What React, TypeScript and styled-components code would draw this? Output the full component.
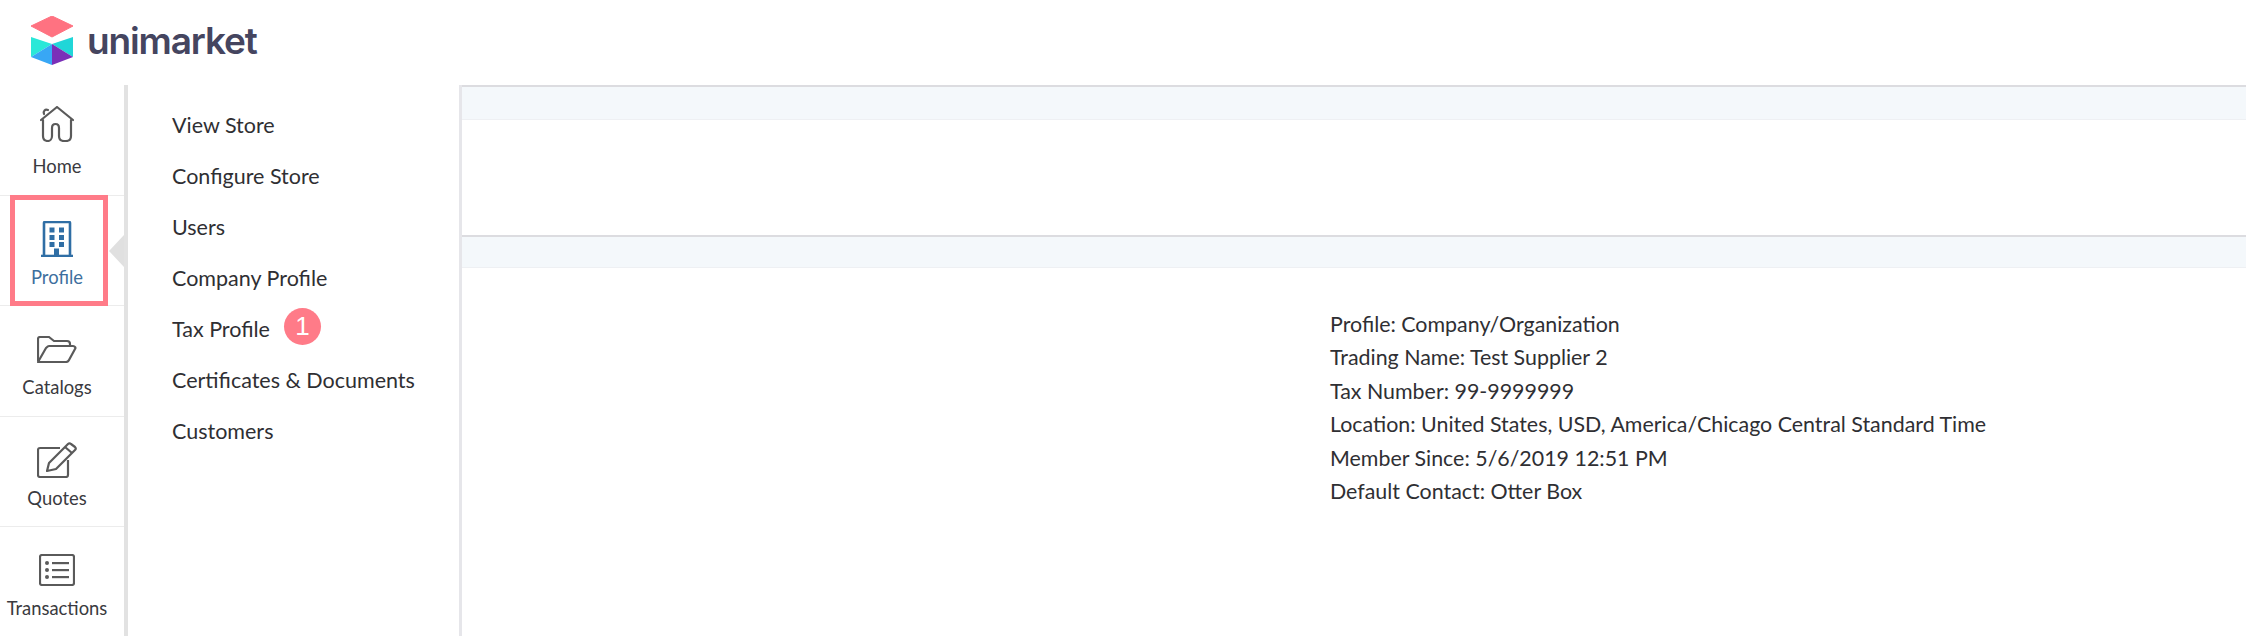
import React from 'react'
import styled, { createGlobalStyle } from 'styled-components';

const GlobalStyle = createGlobalStyle`
    html, body {
        margin: 0;
        padding: 0;
        background: #fff;
        height: 100%;
        overflow: hidden;
    }
    body {
        font-family: "Lato", "Noto Sans", sans-serif;
        color: #2f2f33;
    }
`;

const Page = styled.div`
    width: 2246px;
    height: 636px;
    display: flex;
    flex-direction: column;
    overflow: hidden;
`;

const Header = styled.header`
    height: 85px;
    flex: none;
    display: flex;
    align-items: flex-start;
    padding: 14px 0 0 31px;
    box-sizing: border-box;
`;

const Brand = styled.div`
    display: flex;
    align-items: center;
    gap: 14px;
`;

const BrandName = styled.span`
    font-family: "Inter", sans-serif;
    font-size: 37px;
    font-weight: 600;
    letter-spacing: -1.15px;
    color: #45455f;
    line-height: 50px;
    margin-top: 2px;
`;

const Body = styled.div`
    flex: 1;
    display: flex;
    min-height: 0;
`;

const Rail = styled.nav`
    width: 124px;
    flex: none;
    border-right: 4px solid #e2e2e2;
    position: relative;
`;

const RailItem = styled.a<{ $active?: boolean }>`
    height: 110.6px;
    box-sizing: border-box;
    display: flex;
    flex-direction: column;
    align-items: center;
    padding: 21px 10px 0 0;
    gap: 5px;
    font-size: 18.4px;
    line-height: 22px;
    color: ${props => props.$active ? '#3d6f9e' : '#3a3a40'};
    border-bottom: 1px solid #ececec;
    position: relative;
    &:last-of-type {
        border-bottom: none;
    }
`;

const ActiveFrame = styled.span`
    position: absolute;
    left: 10px;
    top: -1px;
    width: 98px;
    height: 111px;
    box-sizing: border-box;
    border: 5px solid #ff7b88;
`;

const Caret = styled.span`
    position: absolute;
    right: 0;
    top: 150px;
    width: 0;
    height: 0;
    border-top: 16px solid transparent;
    border-bottom: 16px solid transparent;
    border-right: 15px solid #e0e0e0;
`;

const IconBox = styled.span<{ $lift?: number }>`
    width: 44px;
    height: 44px;
    display: flex;
    align-items: center;
    justify-content: center;
    transform: translateY(${props => props.$lift ? -props.$lift : 0}px);
`;

const SubMenu = styled.ul`
    width: 334px;
    flex: none;
    box-sizing: border-box;
    margin: 0;
    padding: 14px 0 0 44px;
    list-style: none;
    border-right: 3px solid #e6e6ea;
`;

const SubItem = styled.li`
    height: 51px;
    display: flex;
    align-items: center;
    gap: 14px;
    font-size: 21.5px;
    color: #2f2f33;
    white-space: nowrap;
`;

const Badge = styled.span`
    width: 37px;
    height: 37px;
    flex: none;
    border-radius: 50%;
    background: #ff7b88;
    color: #fff;
    font-family: "Liberation Sans", sans-serif;
    font-size: 26px;
    display: flex;
    align-items: center;
    justify-content: center;
    margin-top: -5px;
`;

const Content = styled.main`
    flex: 1;
    display: flex;
    flex-direction: column;
    min-width: 0;
`;

const Band = styled.div<{ $height: number }>`
    height: ${props => props.$height}px;
    box-sizing: border-box;
    flex: none;
    background: #f4f8fb;
    border-top: 2px solid #dcdce0;
    border-bottom: 1px solid #eef0f3;
`;

const Spacer = styled.div`
    height: 115px;
    flex: none;
`;

const Details = styled.div`
    padding: 40px 0 0 868px;
    font-size: 21.4px;
    line-height: 33.4px;
    color: #2f2f33;
    white-space: nowrap;
`;

const Logo = () => (
    <svg width="42" height="49" viewBox="0 0 42 49">
        <polygon points="21,0 42,10 21,21 0,10" fill="#ff7281" stroke="#ff7281" strokeLinejoin="round" />
        <polygon points="0,21 21,28 0,41" fill="#2ae8d8" />
        <polygon points="42,21 21,28 42,41" fill="#20d6d8" />
        <polygon points="0,41 21,28 21,49" fill="#38a7f5" />
        <polygon points="42,41 21,28 21,49" fill="#7a2fb8" />
    </svg>
);

const HomeIcon = () => (
    <svg width="34" height="36" viewBox="0 0 34 36" fill="none" stroke="#5a5a5a" strokeWidth="2.2" strokeLinecap="round" strokeLinejoin="round">
        <path d="M1 14 L17 1 L33 14" />
        <path d="M4 8 C3 5 5 3 8 4" />
        <path d="M3 14 V30 C3 33 5 35 8 35 C10 35 12 33 12 30 V22 C12 19 14 18 15.5 18 C17 18 19 19 19 22 V30 C19 33 21 35 24 35 H26 C29 35 31 33 31 30 V14" />
    </svg>
);

const BuildingIcon = () => (
    <svg width="32" height="36" viewBox="0 0 32 36" fill="none" stroke="#2f6ea5" strokeWidth="2.6">
        <path d="M3 35 V2 C3 1.500 3.500 1 4 1 H28 C28.500 1 29 1.500 29 2 V35" />
        <path d="M0 35 H32" />
        <g fill="#2f6ea5" stroke="none">
            <rect x="8.500" y="6.500" width="5" height="5" />
            <rect x="18" y="6.500" width="5" height="5" />
            <rect x="8.500" y="14" width="5" height="5" />
            <rect x="18" y="14" width="5" height="5" />
            <rect x="8.500" y="21" width="5" height="5" />
            <rect x="18" y="21" width="5" height="5" />
            <rect x="13" y="27.500" width="5" height="8" />
        </g>
    </svg>
);

const FolderIcon = () => (
    <svg width="40" height="27" viewBox="0 0 40 27" fill="none" stroke="#5a5a5a" strokeWidth="2.2" strokeLinejoin="round">
        <path d="M1 25 V3 C1 2 2 1 3 1 H12 L17 5 H30 C32 5 33 6 33 8 V10" />
        <path d="M1 26 L9 12 C10 11 11 10 12 10 H36 C38 10 39 12 38 13 L32 24 C31 26 30 26 29 26 H1 Z" />
    </svg>
);

const QuoteIcon = () => (
    <svg width="40" height="36" viewBox="0 0 40 36" fill="none" stroke="#5a5a5a" strokeWidth="2.2" strokeLinejoin="round">
        <path d="M23 6 H3 C2 6 1 7 1 8 V33 C1 34 2 35 3 35 H29 C30 35 31 34 31 33 V18" />
        <path d="M12 21 L31 2 C32 1 33 1 34 2 L38 5 C39 6 39 7 38 8 L19 27 L10 29 Z" />
        <path d="M28 5 L35 11" />
    </svg>
);

const ListIcon = () => (
    <svg width="36" height="32" viewBox="0 0 36 32" fill="none" stroke="#5a5a5a" strokeWidth="2.2">
        <rect x="1" y="1" width="34" height="30" rx="2" />
        <g fill="#5a5a5a" stroke="none">
            <circle cx="8" cy="9" r="2" />
            <circle cx="8" cy="16" r="2" />
            <circle cx="8" cy="23" r="2" />
            <rect x="13" y="8" width="17" height="2.200" />
            <rect x="13" y="15" width="17" height="2.200" />
            <rect x="13" y="22" width="17" height="2.200" />
        </g>
    </svg>
);

const railItems = [
    { label: 'Home', icon: <HomeIcon />, lift: 4 },
    { label: 'Profile', icon: <BuildingIcon />, active: true },
    { label: 'Catalogs', icon: <FolderIcon /> },
    { label: 'Quotes', icon: <QuoteIcon /> },
    { label: 'Transactions', icon: <ListIcon /> },
];

const subItems = ['View Store', 'Configure Store', 'Users', 'Company Profile', 'Tax Profile', 'Certificates & Documents', 'Customers'];

const details = [
    'Profile: Company/Organization',
    'Trading Name: Test Supplier 2',
    'Tax Number: 99-9999999',
    'Location: United States, USD, America/Chicago Central Standard Time',
    'Member Since: 5/6/2019 12:51 PM',
    'Default Contact: Otter Box',
];

export default function App() {
    return (
        <Page>
            <GlobalStyle />
            <Header>
                <Brand>
                    <Logo />
                    <BrandName>unimarket</BrandName>
                </Brand>
            </Header>
            <Body>
                <Rail>
                    {railItems.map(item => (
                        <RailItem key={item.label} $active={item.active}>
                            {item.active && <ActiveFrame />}
                            <IconBox $lift={item.lift}>{item.icon}</IconBox>
                            {item.label}
                        </RailItem>
                    ))}
                    <Caret />
                </Rail>
                <SubMenu>
                    {subItems.map(item => (
                        <SubItem key={item}>
                            {item}
                            {item === 'Tax Profile' && <Badge>1</Badge>}
                        </SubItem>
                    ))}
                </SubMenu>
                <Content>
                    <Band $height={35} />
                    <Spacer />
                    <Band $height={33} />
                    <Details>
                        {details.map(line => <div key={line}>{line}</div>)}
                    </Details>
                </Content>
            </Body>
        </Page>
    )
}
